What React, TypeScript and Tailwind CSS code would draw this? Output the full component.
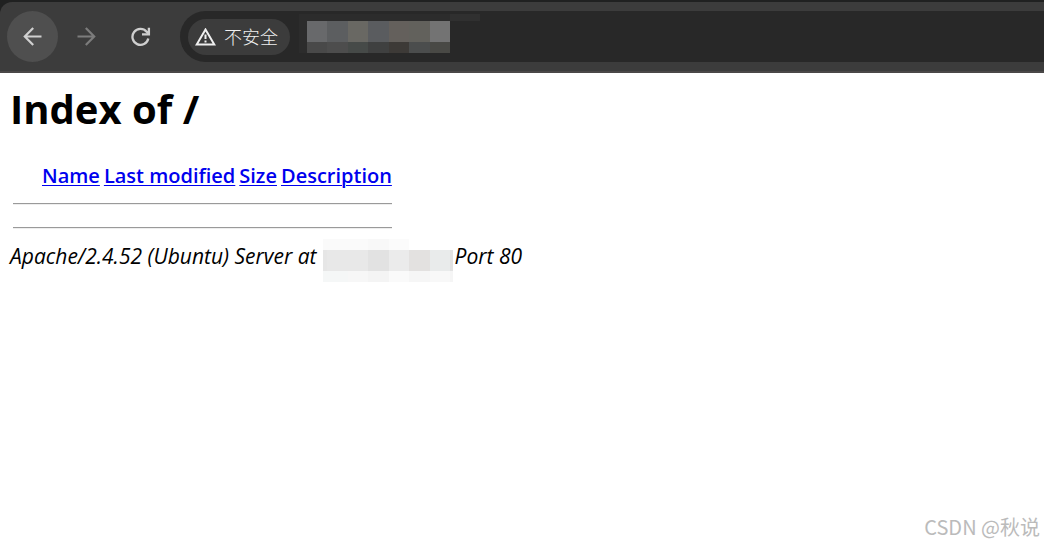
import React from "react";

const urlBlocks = [
  "bg-[#68696b]", "bg-[#5c5e60]", "bg-[#696863]", "bg-[#5a5c5f]", "bg-[#64605c]", "bg-[#62615c]", "bg-[#737373]",
  "bg-[#494949]", "bg-[#4d4d4d]", "bg-[#464a48]", "bg-[#3f4040]", "bg-[#3d3a37]", "bg-[#4b4d4d]", "bg-[#494945]",
];

const hostBlocks = [
  "bg-[#fafafa]", "bg-[#fafafa]", "bg-[#fafafa]", "bg-[#f8f8f8]", "bg-[#fbfbfb]", "bg-[#ffffff]", "bg-[#ffffff]", "bg-[#ffffff]",
  "bg-[#e6e6e6]", "bg-[#e8e8e8]", "bg-[#e8e8e8]", "bg-[#e2e2e2]", "bg-[#ebebeb]", "bg-[#e3e1e0]", "bg-[#e9ebeb]", "bg-[#e2e2e2]",
  "bg-[#f5f7f7]", "bg-[#f5f7f7]", "bg-[#f7f7f7]", "bg-[#f4f4f4]", "bg-[#fafafa]", "bg-[#f6f6f6]", "bg-[#f8f8f8]", "bg-[#f5f5f5]",
];

const columns = [
  { label: "Name", link: "?C=N;O=D" },
  { label: "Last modified", link: "?C=M;O=A" },
  { label: "Size", link: "?C=S;O=A" },
  { label: "Description", link: "?C=D;O=A" },
];

function Toolbar() {
  return (
    <header className="bg-[#202121] pt-[2px]">
      <div className="flex h-[71px] items-center rounded-tl-xl border-b-2 border-[#4a4848] bg-[#3c3c3c] pl-[7px]">
        <button
          aria-label="Back"
          className="flex size-[51px] shrink-0 items-center justify-center rounded-full bg-[#4f4f4f] text-[#d0d0d0]"
        >
          <svg width="19" height="19" viewBox="0 0 19 19" fill="none" stroke="currentColor" strokeWidth="2.2">
            <path d="M18.500 9.500H2M10.200 1 1.800 9.500l8.400 8.500" />
          </svg>
        </button>
        <button
          aria-label="Forward"
          className="ml-[3px] flex size-[51px] shrink-0 items-center justify-center rounded-full text-[#7c7c7c]"
        >
          <svg width="19" height="19" viewBox="0 0 19 19" fill="none" stroke="currentColor" strokeWidth="2.2">
            <path d="M.5 9.500H17M8.800 1l8.400 8.500L8.800 18" />
          </svg>
        </button>
        <button
          aria-label="Reload"
          className="ml-[3px] flex size-[51px] shrink-0 items-center justify-center rounded-full text-[#cfcfcf]"
        >
          <svg width="20" height="20" viewBox="0 0 20 20" fill="none" stroke="currentColor" strokeWidth="2.3">
            <path d="M17.300 11.500A8 8 0 1 1 15.600 4.700L18 7" />
            <path d="M17.900 .8V7.300H11" />
            <path d="M14.500 4.500 18 7.500V4z" fill="currentColor" stroke="none" />
          </svg>
        </button>
        <div className="ml-[14px] flex h-[51px] min-w-0 flex-1 items-center rounded-l-full bg-[#282828] pl-2">
          <button className="flex h-9 shrink-0 items-center gap-2 rounded-full bg-[#3c3c3c] pr-3 pl-[7px] text-lg font-light text-[#f0f0f0]">
            <svg width="21" height="18" viewBox="0 0 21 18" fill="none" stroke="currentColor" strokeWidth="2">
              <path d="M10.500 1.500 1.700 16.500h17.600z" />
              <path d="M10.500 6.500v4.500M10.500 12.500v2" />
            </svg>
            不安全
          </button>
          <div className="mt-[3px] ml-[9px] h-[39px] w-[181px] shrink-0 self-start bg-linear-to-b from-[#303030] from-[7px] to-transparent to-[7px]">
            <div className="w-[151px] bg-[#2c2c2c] pt-[7px] pl-2">
              <div className="grid grid-cols-7 grid-rows-[21px_11px]">
                {urlBlocks.map((color, i) => (
                  <span key={i} className={color} />
                ))}
              </div>
            </div>
          </div>
        </div>
      </div>
    </header>
  );
}

export default function App() {
  return (
    <div className="relative flex min-h-screen flex-col bg-white font-['Open_Sans','Noto_Sans_CJK_SC',sans-serif] text-black">
      <Toolbar />
      <main className="px-[10px] pt-2 text-xl">
        <h1 className="text-[40px] leading-14 font-bold">Index of /</h1>
        <table className="mt-[22px] border-separate border-spacing-[2px]">
          <thead>
            <tr>
              <th className="w-[27px] p-px" />
              {columns.map((c) => (
                <th key={c.label} className="p-px leading-7 font-semibold">
                  <a href={c.link} className="text-[#0000ee] underline decoration-1 underline-offset-2">
                    {c.label}
                  </a>
                </th>
              ))}
            </tr>
          </thead>
          <tbody>
            {[0, 1].map((row) => (
              <tr key={row}>
                <th colSpan={5} className="p-px">
                  <hr className="my-[9px] border-t border-b border-t-[#9a9a9a] border-b-[#eeeeee]" />
                </th>
              </tr>
            ))}
          </tbody>
        </table>
        <address className="-mt-[2px] flex items-start text-[21px] leading-[34px]">
          Apache/2.4.52 (Ubuntu) Server at
          <span className="mr-[2px] ml-[6px] grid grid-cols-[4px_21px_20px_21px_20px_21px_20px_3px] grid-rows-[11px_21px_11px]">
            {hostBlocks.map((color, i) => (
              <span key={i} className={color} />
            ))}
          </span>
          Port 80
        </address>
      </main>
      <p className="absolute right-1 bottom-1 font-['Noto_Sans_CJK_SC',sans-serif] text-xl leading-7 text-[#bbbbbb]">
        CSDN @秋说
      </p>
    </div>
  );
}
